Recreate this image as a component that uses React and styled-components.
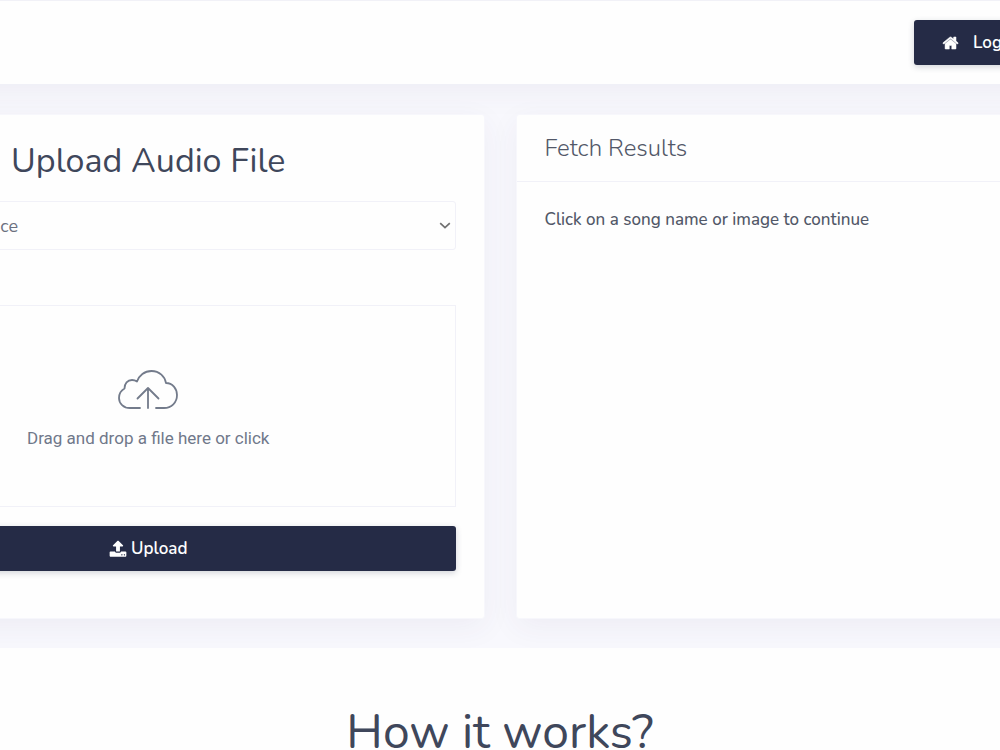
import React from "react";
import styled, { createGlobalStyle } from "styled-components";

const GlobalStyle = createGlobalStyle`
  *, *::before, *::after { box-sizing: border-box; }
  body {
    margin: 0;
    background: #fefefe;
    color: #525868;
    font-family: "Nunito", "Noto Sans", sans-serif;
    font-size: 17px;
    line-height: 24px;
  }
  h1, h2, p { margin: 0; }
`;

const bleed = 188;

const Page = styled.div`
  overflow: hidden;
`;

const Header = styled.header`
  position: relative;
  display: flex;
  justify-content: flex-end;
  height: 84px;
  margin: 0 -${bleed}px;
  padding: 19px 144px 0 0;
  border-top: 1px solid #f1f1f7;
  background: #fefefe;
  box-shadow: 0 8px 30px rgba(60, 56, 110, 0.06);
  z-index: 1;
`;

const Button = styled.button`
  display: flex;
  align-items: center;
  justify-content: center;
  gap: ${(p) => (p.$wide ? "4px" : "14px")};
  width: ${(p) => (p.$wide ? "100%" : "130px")};
  height: 45px;
  padding: 0 28px;
  border: 0;
  border-radius: 3px;
  background: #252b46;
  color: #fefefe;
  font-family: "Nunito", "Noto Sans", sans-serif;
  font-size: 17px;
  font-weight: 600;
  line-height: 24px;
  white-space: nowrap;
  box-shadow: 0 2px 6px rgba(37, 43, 70, 0.2);
`;

const Workspace = styled.main`
  display: grid;
  grid-template-columns: 1fr 1fr;
  gap: 31px;
  margin: 0 -${bleed}px;
  padding: 30px 0 29px;
  background: #f8f8fd;
  overflow: hidden;
`;

const Card = styled.section`
  min-height: 505px;
  border: 1px solid #f7f7fc;
  border-radius: 3px;
  background: #fefefe;
  box-shadow: 0 8px 30px rgba(60, 56, 110, 0.06);
`;

const UploadForm = styled.form`
  padding: 24px 28px;
`;

const Title = styled.h1`
  margin-bottom: 18px;
  color: #3f475b;
  font-size: 34px;
  font-weight: 400;
  line-height: 44px;
  text-align: center;
`;

const SelectBox = styled.div`
  display: grid;
  align-items: center;
  margin-bottom: 55px;

  > * { grid-area: 1 / 1; }
  > svg {
    justify-self: end;
    margin-right: 5px;
    pointer-events: none;
  }
`;

const SourceSelect = styled.select`
  appearance: none;
  width: 100%;
  height: 49px;
  padding: 0 24px 0 10px;
  border: 1px solid #f1f1f8;
  border-radius: 3px;
  background: #fefefe;
  color: #6b7080;
  font-family: "Nunito", "Noto Sans", sans-serif;
  font-size: 18px;
`;

const DropZone = styled.label`
  display: flex;
  flex-direction: column;
  align-items: center;
  justify-content: center;
  gap: 16px;
  height: 202px;
  margin-bottom: 19px;
  padding-top: 8px;
  border: 1px solid #f1f1f8;
  color: #70788a;
  font-family: Roboto, sans-serif;
`;

const FileInput = styled.input`
  position: absolute;
  width: 1px;
  height: 1px;
  opacity: 0;
`;

const CardHeader = styled.header`
  padding: 18px 28px;
  border-bottom: 1px solid #f1f1f8;
`;

const CardTitle = styled.h2`
  font-size: 24px;
  font-weight: 300;
  line-height: 30px;
`;

const CardText = styled.p`
  padding: 26px 28px;
  font-weight: 500;
`;

const HowSection = styled.section`
  padding: 52px 0 0;
  text-align: center;
`;

const SectionTitle = styled.h2`
  color: #3f475b;
  font-size: 48px;
  font-weight: 400;
  line-height: 64px;
`;

const HomeIcon = () => (
  <svg width="18" height="18" viewBox="0 0 1792 1792" fill="currentColor" stroke="currentColor" strokeWidth="50" aria-hidden="true">
    <path d="M1472 992v480q0 26-19 45t-45 19h-384v-384h-256v384h-384q-26 0-45-19t-19-45v-480q0-1 .5-3t.5-3l575-474 575 474q1 2 1 6zm223-69l-62 74q-8 9-21 11h-3q-13 0-21-7l-692-577-692 577q-12 8-24 7-13-2-21-11l-62-74q-8-10-7-23.500t11-21.500l719-599q32-26 76-26t76 26l244 204v-195q0-14 9-23t23-9h192q14 0 23 9t9 23v408l219 182q10 8 11 21.500t-7 23.500z" />
  </svg>
);

const UploadIcon = () => (
  <svg width="18" height="18" viewBox="0 0 1792 1792" fill="currentColor" aria-hidden="true">
    <path d="M1344 1472q0-26-19-45t-45-19-45 19-19 45 19 45 45 19 45-19 19-45zm256 0q0-26-19-45t-45-19-45 19-19 45 19 45 45 19 45-19 19-45zm128-224v320q0 40-28 68t-68 28h-1472q-40 0-68-28t-28-68v-320q0-40 28-68t68-28h427q21 56 70.500 92t110.500 36h256q61 0 110.500-36t70.500-92h427q40 0 68 28t28 68zm-325-648q-17 40-59 40h-256v448q0 26-19 45t-45 19h-256q-26 0-45-19t-19-45v-448h-256q-42 0-59-40-17-39 14-69l448-448q18-19 45-19t45 19l448 448q31 30 14 69z" />
  </svg>
);

const ChevronIcon = () => (
  <svg width="12" height="8" viewBox="0 0 12 8" fill="none" stroke="#707070" strokeWidth="1.700" aria-hidden="true">
    <path d="M1.200 1.200L6 5.700L10.800 1.200" />
  </svg>
);

const CloudIcon = () => (
  <svg width="60" height="40" viewBox="0 0 60 40" fill="none" stroke="#737b8b" strokeWidth="1.800" strokeLinecap="round" strokeLinejoin="round" aria-hidden="true">
    <path d="M22 38H12C5.500 38 1 33.500 1 28C1 23.500 3 20.500 6.500 18.500C6.500 13.500 9.500 10 14 10C16 10 17.500 10.500 19 11.500C21 5.500 26.500 1 33.500 1C41.500 1 47 6.500 48 13C54.500 13 59 18.500 59 25C59 32.500 53.500 38 46 38H38" />
    <path d="M30 38V18M19.500 28.500L30 18L40.500 28.500" />
  </svg>
);

export default function App() {
  return (
    <Page>
      <GlobalStyle />
      <Header>
        <Button type="button">
          <HomeIcon />
          Login
        </Button>
      </Header>
      <Workspace>
        <Card>
          <UploadForm onSubmit={(e) => e.preventDefault()}>
            <Title>Upload Audio File</Title>
            <SelectBox>
              <SourceSelect aria-label="Service" defaultValue="service">
                <option value="service">Select Audio Service</option>
              </SourceSelect>
              <ChevronIcon />
            </SelectBox>
            <DropZone>
              <CloudIcon />
              Drag and drop a file here or click
              <FileInput type="file" />
            </DropZone>
            <Button type="submit" $wide>
              <UploadIcon />
              Upload
            </Button>
          </UploadForm>
        </Card>
        <Card>
          <CardHeader>
            <CardTitle>Fetch Results</CardTitle>
          </CardHeader>
          <CardText>Click on a song name or image to continue</CardText>
        </Card>
      </Workspace>
      <HowSection>
        <SectionTitle>How it works?</SectionTitle>
      </HowSection>
    </Page>
  );
}
